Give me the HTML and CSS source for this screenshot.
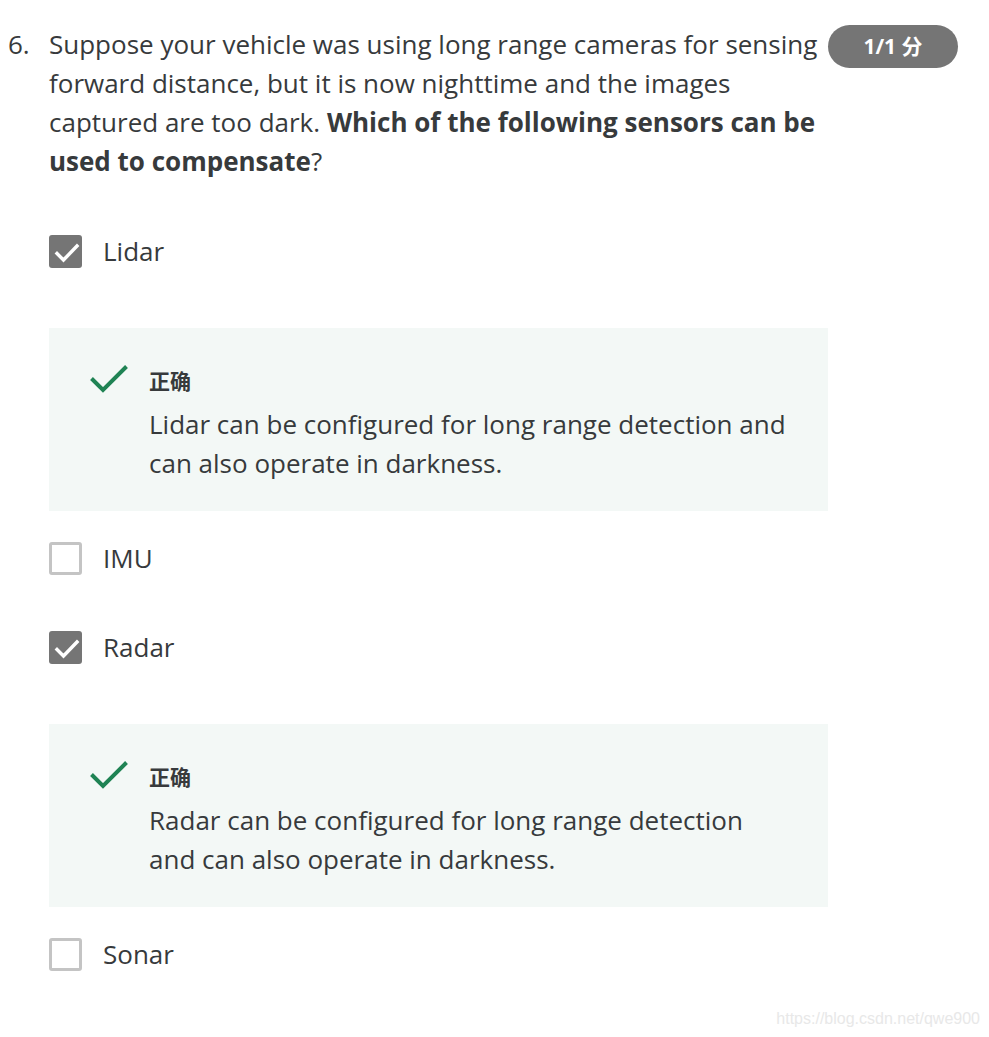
FILE: index.html
```html
<!DOCTYPE html>
<html lang="en">
<head>
<meta charset="utf-8">
<title>Quiz question</title>
<link rel="stylesheet" href="styles.css">
</head>
<body>
<div class="page">
  <div class="question">
    <div class="num">6.</div>
    <div class="qtext">Suppose your vehicle was using long range cameras for sensing forward distance, but it is now nighttime and the images captured are too dark. <b>Which of the following sensors can be used to compensate</b>?</div>
    <div class="badge">1/1 分</div>
  </div>

  <div class="options">
    <div class="option">
      <span class="box checked"><svg viewBox="0 0 33 33" width="33" height="33"><path d="M8 18.5 L14.5 25 L28 11" fill="none" stroke="#fff" stroke-width="3.4" stroke-linecap="square"/></svg></span>
      <span class="label">Lidar</span>
    </div>
    <div class="feedback">
      <svg class="tick" viewBox="0 0 38 28" width="38" height="28"><path d="M1.5 13.5 L13 25 L36.5 1.5" fill="none" stroke="#1f8354" stroke-width="4"/></svg>
      <div class="fb-body">
        <div class="fb-title">正确</div>
        <div class="fb-text">Lidar can be configured for long range detection and can also operate in darkness.</div>
      </div>
    </div>
    <div class="option after-fb">
      <span class="box"></span>
      <span class="label">IMU</span>
    </div>
    <div class="option">
      <span class="box checked"><svg viewBox="0 0 33 33" width="33" height="33"><path d="M8 18.5 L14.5 25 L28 11" fill="none" stroke="#fff" stroke-width="3.4" stroke-linecap="square"/></svg></span>
      <span class="label">Radar</span>
    </div>
    <div class="feedback">
      <svg class="tick" viewBox="0 0 38 28" width="38" height="28"><path d="M1.5 13.5 L13 25 L36.5 1.5" fill="none" stroke="#1f8354" stroke-width="4"/></svg>
      <div class="fb-body">
        <div class="fb-title">正确</div>
        <div class="fb-text">Radar can be configured for long range detection and can also operate in darkness.</div>
      </div>
    </div>
    <div class="option after-fb">
      <span class="box"></span>
      <span class="label">Sonar</span>
    </div>
  </div>
  <div class="watermark">https://blog.csdn.net/qwe900</div>
</div>
</body>
</html>
```

FILE: styles.css
```css
html, body {
  margin: 0;
  padding: 0;
  background: #fff;
}
.page {
  position: relative;
  width: 989px;
  height: 1037px;
  font-family: "Open Sans", "Noto Sans CJK SC", sans-serif;
  color: #373a3c;
  font-size: 26px;
  line-height: 39px;
}
.question {
  display: flex;
  align-items: flex-start;
  padding-top: 25px;
  padding-left: 8px;
}
.num {
  width: 41px;
  flex: none;
}
.qtext {
  width: 779px;
  flex: none;
}
.qtext b {
  font-weight: 700;
}
.badge {
  flex: none;
  width: 130px;
  height: 43px;
  border-radius: 22px;
  background: #757575;
  color: #fff;
  font-weight: 700;
  font-size: 21px;
  line-height: 43px;
  text-align: center;
  font-family: "Open Sans", "Noto Sans CJK SC", sans-serif;
}
.options {
  padding-left: 49px;
  width: 779px;
  display: flex;
  flex-direction: column;
  padding-top: 51px;
}
.option {
  display: flex;
  align-items: center;
  height: 39px;
  margin-bottom: 50px;
}
.option + .feedback {
  margin-top: 7px;
}
.feedback + .option {
  margin-top: 28px;
}
.box {
  flex: none;
  width: 33px;
  height: 33px;
  box-sizing: border-box;
  border: 3px solid #c4c4c4;
  border-radius: 3px;
  background: #fff;
  display: flex;
}
.box.checked {
  border: none;
  background: #757575;
}
.box svg {
  display: block;
}
.label {
  margin-left: 21px;
}
.feedback {
  display: flex;
  align-items: flex-start;
  background: #f3f8f6;
  padding: 37px 38px 28px 41px;
}
.tick {
  flex: none;
  display: block;
}
.fb-body {
  margin-left: 21px;
  width: 640px;
}
.fb-title {
  font-family: "Noto Sans CJK SC", sans-serif;
  font-weight: 700;
  font-size: 21px;
  line-height: 30px;
  margin-bottom: 10px;
}
.fb-text {
  font-size: 26px;
  line-height: 39px;
}
.watermark {
  position: absolute;
  right: 9px;
  bottom: 8px;
  font-family: "Liberation Sans", Arial, sans-serif;
  font-size: 16px;
  line-height: 20px;
  color: #e8e8e8;
}
```
